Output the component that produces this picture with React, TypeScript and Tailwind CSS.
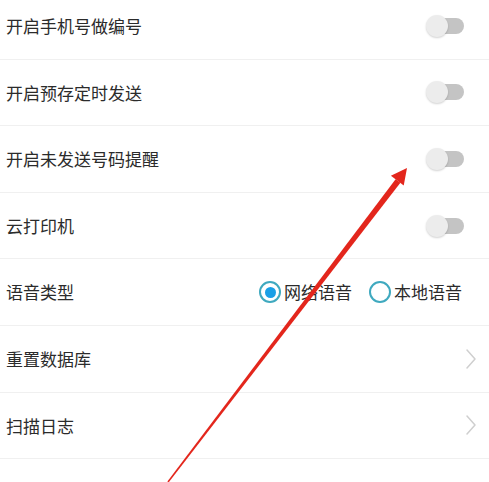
type Row =
  | { kind: "toggle"; label: string }
  | { kind: "radio"; label: string }
  | { kind: "link"; label: string };

const rows: Row[] = [
  { kind: "toggle", label: "开启手机号做编号" },
  { kind: "toggle", label: "开启预存定时发送" },
  { kind: "toggle", label: "开启未发送号码提醒" },
  { kind: "toggle", label: "云打印机" },
  { kind: "radio", label: "语音类型" },
  { kind: "link", label: "重置数据库" },
  { kind: "link", label: "扫描日志" },
  { kind: "link", label: "" },
];

function Toggle() {
  return (
    <div className="relative flex h-[24px] w-[45px] items-center">
      <div className="ml-[10px] h-[16px] w-[29px] rounded-full bg-[#c4c4c4]" />
      <div className="absolute left-[1px] top-[1px] h-[22px] w-[22px] rounded-full bg-[#ececec] shadow-[0_1px_2px_rgba(0,0,0,0.18)]" />
    </div>
  );
}

function Radio({ checked, label }: { checked: boolean; label: string }) {
  return (
    <div className="flex items-center gap-[3px]">
      <div className="flex h-[22px] w-[22px] items-center justify-center rounded-full border-[2.5px] border-[#3fa9bf]">
        {checked && <div className="h-[11px] w-[11px] rounded-full bg-[#1a9fe6]" />}
      </div>
      <span>{label}</span>
    </div>
  );
}

function Chevron() {
  return (
    <svg width="12" height="22" viewBox="0 0 12 22" fill="none">
      <path d="M2 2l8 9-8 9" stroke="#cfcfcf" strokeWidth="1.5" strokeLinecap="round" strokeLinejoin="round" />
    </svg>
  );
}

export default function App() {
  return (
    <div
      className="relative h-[482px] w-[489px] overflow-hidden bg-white text-[17px] text-[#2b2b2b]"
      style={{ fontFamily: '"Noto Sans CJK SC", "Noto Sans", sans-serif' }}
    >
      <div className="-mt-[7px]">
        {rows.map((row, i) => (
          <div
            key={i}
            className="flex h-[66.6px] items-center justify-between border-b border-[#f0f0f0] pl-[6px]"
          >
            <span>{row.label}</span>
            {row.kind === "toggle" && (
              <div className="mr-[19px]">
                <Toggle />
              </div>
            )}
            {row.kind === "radio" && (
              <div className="mr-[27px] flex items-center gap-[17px]">
                <Radio checked label="网络语音" />
                <Radio checked={false} label="本地语音" />
              </div>
            )}
            {row.kind === "link" && row.label && (
              <div className="mr-[12px]">
                <Chevron />
              </div>
            )}
          </div>
        ))}
      </div>

      <svg className="pointer-events-none absolute inset-0" width="489" height="482" viewBox="0 0 489 482">
        <polygon points="400.4,182.8 395.6,179.2 167.4,481.5 168.6,482.5" fill="#e3261c" />
        <polygon points="407,168 390.9,175.8 403.7,185.6" fill="#e3261c" />
      </svg>
    </div>
  );
}
